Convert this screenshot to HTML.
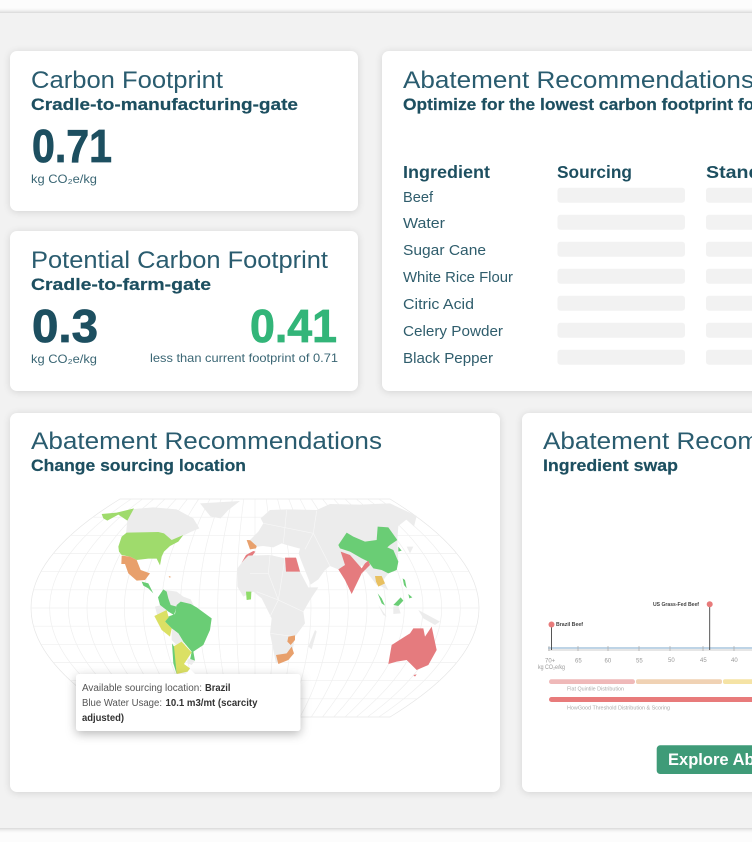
<!DOCTYPE html>
<html><head><meta charset="utf-8"><style>
html,body{margin:0;padding:0;width:752px;height:842px;overflow:hidden;background:#fcfcfc}
.panel{position:absolute;left:-20px;top:13px;width:800px;height:815px;background:#f2f2f2;box-shadow:0 0 5px rgba(0,0,0,.28)}
.card{position:absolute;background:#fff;border-radius:7px;box-shadow:0 1px 8px rgba(0,0,0,.13)}
svg{position:absolute;left:0;top:0;filter:blur(.25px)}
text{font-family:"Liberation Sans",sans-serif;fill:#1d4f60}
.t{font-size:24.5px;fill:#2a5c6f}
.s{font-size:17px;font-weight:700;stroke:#1d4f60;stroke-width:.2px}
.n{font-size:46px;font-weight:700;stroke:#1d4f60;stroke-width:.8px}
.u{font-size:12px;fill:#3a6674}
.h{font-size:17.5px;font-weight:700}
.r{font-size:15px;fill:#2f5d6c}
.g{font-size:6px;fill:#999}
.l{font-size:5.5px;font-weight:700;fill:#444}
.q{font-size:5.5px;fill:#aaa}
.p{font-size:10px;fill:#555}
.pb{font-size:10px;fill:#333;font-weight:700}
</style></head><body>
<div class="panel"></div>
<div class="card" style="left:10px;top:51px;width:348px;height:160px"></div>
<div class="card" style="left:10px;top:231px;width:348px;height:160px"></div>
<div class="card" style="left:382px;top:51px;width:400px;height:340px"></div>
<div class="card" style="left:10px;top:413px;width:490px;height:379px"></div>
<div class="card" style="left:522px;top:413px;width:300px;height:379px"></div>
<svg width="752" height="842" viewBox="0 0 752 842" xmlns="http://www.w3.org/2000/svg">
<defs>
<clipPath id="mc"><path d="M120 499 Q-58 608 120 717 L390 717 Q568 608 390 499Z"/></clipPath>
<filter id="ds" x="-20%" y="-40%" width="140%" height="200%"><feDropShadow dx="0" dy="3" stdDeviation="5" flood-color="#000" flood-opacity=".28"/></filter>
</defs>

<text class="t" x="31" y="88" textLength="192" lengthAdjust="spacingAndGlyphs">Carbon Footprint</text>
<text class="s" x="31" y="110" textLength="267" lengthAdjust="spacingAndGlyphs">Cradle-to-manufacturing-gate</text>
<text class="n" x="32" y="162" textLength="80" lengthAdjust="spacingAndGlyphs">0.71</text>
<text class="u" x="31" y="183" textLength="66" lengthAdjust="spacingAndGlyphs">kg CO₂e/kg</text>

<text class="t" x="31" y="268" textLength="297" lengthAdjust="spacingAndGlyphs">Potential Carbon Footprint</text>
<text class="s" x="31" y="290" textLength="180" lengthAdjust="spacingAndGlyphs">Cradle-to-farm-gate</text>
<text class="n" x="32" y="342" textLength="66" lengthAdjust="spacingAndGlyphs">0.3</text>
<text class="n" x="250" y="342" textLength="87" lengthAdjust="spacingAndGlyphs" style="fill:#33b579;stroke:#33b579">0.41</text>
<text class="u" x="31" y="363" textLength="66" lengthAdjust="spacingAndGlyphs">kg CO₂e/kg</text>
<text class="u" x="150" y="362" textLength="188" lengthAdjust="spacingAndGlyphs">less than current footprint of 0.71</text>

<text class="t" x="403" y="88" textLength="351" lengthAdjust="spacingAndGlyphs">Abatement Recommendations</text>
<text class="s" x="403" y="110" textLength="358" lengthAdjust="spacingAndGlyphs">Optimize for the lowest carbon footprint for</text>
<text class="h" x="403" y="178" textLength="87" lengthAdjust="spacingAndGlyphs">Ingredient</text>
<text class="h" x="557" y="178" textLength="75" lengthAdjust="spacingAndGlyphs">Sourcing</text>
<text class="h" x="706" y="178" textLength="85" lengthAdjust="spacingAndGlyphs">Standard</text>
<text class="r" x="403" y="202" textLength="30" lengthAdjust="spacingAndGlyphs">Beef</text>
<text class="r" x="403" y="228" textLength="42" lengthAdjust="spacingAndGlyphs">Water</text>
<text class="r" x="403" y="255" textLength="83" lengthAdjust="spacingAndGlyphs">Sugar Cane</text>
<text class="r" x="403" y="282" textLength="110" lengthAdjust="spacingAndGlyphs">White Rice Flour</text>
<text class="r" x="403" y="309" textLength="71" lengthAdjust="spacingAndGlyphs">Citric Acid</text>
<text class="r" x="403" y="336" textLength="100" lengthAdjust="spacingAndGlyphs">Celery Powder</text>
<text class="r" x="403" y="363" textLength="90" lengthAdjust="spacingAndGlyphs">Black Pepper</text>
<g fill="#f2f2f2">
<rect x="557.5" y="187.7" width="127.5" height="15" rx="3"/><rect x="706" y="187.7" width="60" height="15" rx="3"/>
<rect x="557.5" y="214.7" width="127.5" height="15" rx="3"/><rect x="706" y="214.7" width="60" height="15" rx="3"/>
<rect x="557.5" y="241.7" width="127.5" height="15" rx="3"/><rect x="706" y="241.7" width="60" height="15" rx="3"/>
<rect x="557.5" y="268.7" width="127.5" height="15" rx="3"/><rect x="706" y="268.7" width="60" height="15" rx="3"/>
<rect x="557.5" y="295.7" width="127.5" height="15" rx="3"/><rect x="706" y="295.7" width="60" height="15" rx="3"/>
<rect x="557.5" y="322.7" width="127.5" height="15" rx="3"/><rect x="706" y="322.7" width="60" height="15" rx="3"/>
<rect x="557.5" y="349.7" width="127.5" height="15" rx="3"/><rect x="706" y="349.7" width="60" height="15" rx="3"/>
</g>

<text class="t" x="31" y="449" textLength="351" lengthAdjust="spacingAndGlyphs">Abatement Recommendations</text>
<text class="s" x="31" y="471" textLength="215" lengthAdjust="spacingAndGlyphs">Change sourcing location</text>
<text class="t" x="543" y="449" textLength="351" lengthAdjust="spacingAndGlyphs">Abatement Recommendations</text>
<text class="s" x="543" y="471" textLength="135" lengthAdjust="spacingAndGlyphs">Ingredient swap</text>

<!-- map graticule -->
<g fill="none" stroke="#efefef" stroke-width=".7">
<path d="M120 499 Q-58 608 120 717 L390 717 Q568 608 390 499Z" stroke="#e6e6e6"/>
<path d="M255 499V717"/>
<path d="M266.25 499Q281.08 608 266.25 717M277.5 499Q307.17 608 277.5 717M288.75 499Q333.25 608 288.75 717M300 499Q359.33 608 300 717M311.25 499Q385.42 608 311.25 717M322.5 499Q411.5 608 322.5 717M333.75 499Q437.58 608 333.75 717M345 499Q463.67 608 345 717M356.25 499Q489.75 608 356.25 717M367.5 499Q515.83 608 367.5 717M378.75 499Q541.92 608 378.75 717"/>
<path d="M243.75 499Q228.92 608 243.75 717M232.5 499Q202.83 608 232.5 717M221.25 499Q176.75 608 221.25 717M210 499Q150.67 608 210 717M198.75 499Q124.58 608 198.75 717M187.5 499Q98.5 608 187.5 717M176.25 499Q72.42 608 176.25 717M165 499Q46.33 608 165 717M153.75 499Q20.25 608 153.75 717M142.5 499Q-5.83 608 142.5 717M131.25 499Q-31.92 608 131.25 717"/>
<g clip-path="url(#mc)"><path d="M20 517.2H490M20 535.3H490M20 553.5H490M20 571.7H490M20 589.8H490M20 608H490M20 626.2H490M20 644.3H490M20 662.5H490M20 680.7H490M20 698.8H490"/></g>
</g>

<!-- americas (crop A coordinates) -->
<g transform="translate(20 490) scale(.33333)">
<path fill="#ececec" d="M330 58L400 52 470 58 520 85 538 115 512 126 490 137 455 152 432 132 415 128 318 130 322 92Z"/>
<path fill="#ececec" d="M540 40L660 33 625 60 602 85 572 80Z"/>
<path fill="#9fdb6c" d="M245 72L290 68 342 55 322 92 295 74 262 92 250 85Z"/>
<path fill="#9fdb6c" d="M295 170L305 140 320 128 415 126 432 130 455 150 490 135 475 155 450 168 432 185 425 200 420 226 410 206 385 206 350 210 330 200 305 195 297 185Z"/>
<path fill="#e8a06c" d="M305 197L330 200 350 210 362 240 390 250 375 270 350 272 325 250 315 222 304 222Z"/>
<path fill="#6acd75" d="M365 275L385 280 400 310 385 295 370 287Z"/>
<path fill="#e8a06c" d="M446 258L454 261 448 263Z"/>
<path fill="#ececec" d="M435 300L470 305 490 320 512 328 522 348 490 338 470 350 450 345Z"/>
<path fill="#6acd75" d="M430 298L440 305 445 325 452 345 470 350 462 375 445 365 420 345 414 322Z"/>
<path fill="#ececec" d="M405 350L420 346 442 362 412 378Z"/>
<path fill="#6acd75" d="M435 395L445 380 465 372 470 345 482 335 512 342 530 352 575 385 570 420 550 465 520 485 525 512 510 510 515 485 490 455 475 430 455 415Z"/>
<path fill="#dbe064" d="M403 378L440 360 446 382 435 395 455 415 450 440 425 420Z"/>
<path fill="#ececec" d="M455 415L475 430 490 455 470 465 455 450Z"/>
<path fill="#dbe064" d="M460 470L485 455 515 487 500 510 492 522 510 535 503 545 470 552Z"/>
<path fill="#ececec" d="M505 505L525 512 515 525 503 520Z"/>
<path fill="#6acd75" d="M456 460L462 470 470 552 460 520Z"/>
<path fill="#e8a06c" d="M680 150L716 152 708 175 690 178Z"/>
<path fill="#e57b7e" d="M700 183L706 185 690 207 665 218 678 195Z"/>
</g>

<!-- old world (crop B coordinates) -->
<g transform="translate(250 490) scale(.33333)">
<path fill="#ececec" d="M0 150L25 125 40 100 32 85 60 60 110 58 200 60 240 42 330 44 420 40 500 78 492 110 470 88 445 108 442 150 445 215 440 240 415 250 400 270 415 300 395 290 380 285 365 265 345 240 335 225 305 310 285 270 265 238 240 228 225 240 205 268 182 284 152 208 146 190 150 176 110 165 95 160 70 172 40 168 22 170Z"/>
<path fill="#ececec" d="M-38 235L-20 212 -5 197 60 195 105 205 140 205 150 245 175 292 205 292 180 330 160 365 165 400 135 440 128 480 110 505 78 520 70 480 60 430 65 385 35 325 10 305 -20 320 -38 290Z"/>
<path fill="#ececec" d="M195 420L200 425 185 478 175 470Z"/>
<path fill="#ececec" d="M385 345L410 380 400 375ZM430 350L445 348 452 370 430 372ZM505 360L570 395 555 405 520 385ZM470 170L490 170 480 190Z"/>
<path fill="none" stroke="#f7f7f7" stroke-width="2" d="M60 195L55 250 85 330 60 380M105 205L85 330 160 365M0 250H55M20 305L85 330M60 430L135 440M200 62L190 130 165 178M240 228L190 130M110 60L100 160M40 100L190 130"/>
<path fill="#e57b7e" d="M105 203L138 203 150 245 108 245Z"/>
<path fill="#8fdc6a" d="M-12 305L4 305 3 328 -10 330Z"/>
<path fill="#e8a06c" d="M78 495L110 490 125 470 132 490 115 510 85 522ZM115 440L135 436 135 450 122 465 112 455Z"/>
<path fill="#6acd75" d="M265 165L290 128 310 140 345 155 380 150 383 110 415 112 442 150 420 165 412 172 430 180 445 215 440 240 415 250 395 240 370 235 355 215 335 205 300 185 270 175Z"/>
<path fill="#e57b7e" d="M272 185L300 195 335 235 345 220 355 212 360 225 335 250 305 312 285 270 265 238 285 225Z"/>
<path fill="#e8c060" d="M375 258L395 258 405 280 385 290 378 275Z"/>
<path fill="#6acd75" d="M383 310L395 325 405 347 395 340ZM430 345L452 322 460 332 445 348ZM458 265L465 270 470 295 462 285ZM475 312L487 322 478 325ZM445 170L455 182 445 185Z"/>
<path fill="#e57b7e" d="M415 522L425 465 480 430 490 415 520 415 525 440 545 410 560 480 535 525 500 540 470 510 440 515ZM490 555L500 553 495 560Z"/>
</g>

<!-- tooltip -->
<rect x="76" y="674" width="224.500" height="57" rx="3" fill="#fff" filter="url(#ds)"/>
<path d="M185 675L190 669 196 675Z" fill="#fff"/>
<text class="p" x="82" y="691" textLength="120" lengthAdjust="spacingAndGlyphs">Available sourcing location:</text>
<text class="pb" x="205" y="691" textLength="25.500" lengthAdjust="spacingAndGlyphs">Brazil</text>
<text class="p" x="82" y="706" textLength="80" lengthAdjust="spacingAndGlyphs">Blue Water Usage:</text>
<text class="pb" x="165.500" y="706" textLength="92" lengthAdjust="spacingAndGlyphs">10.1 m3/mt (scarcity</text>
<text class="pb" x="82" y="721" textLength="42" lengthAdjust="spacingAndGlyphs">adjusted)</text>

<!-- timeline -->
<path d="M548 650H752" stroke="#bbb" stroke-width=".8"/>
<path d="M548 648H752" stroke="#a9c5de" stroke-width="1.400"/>
<path d="M549 646V651M578 646V651M608 646V651M639 646V651M670 646V651M703 646V651M734 646V651" stroke="#aaa" stroke-width=".7"/>
<path d="M551.500 625V650M709.700 605V650" stroke="#444" stroke-width=".9"/>
<circle cx="551.500" cy="624.500" r="3" fill="#e87b7b"/>
<circle cx="709.700" cy="604.300" r="3" fill="#e87b7b"/>
<text class="l" x="556" y="626" textLength="27" lengthAdjust="spacingAndGlyphs">Brazil Beef</text>
<text class="l" x="653" y="606" textLength="46" lengthAdjust="spacingAndGlyphs">US Grass-Fed Beef</text>
<text class="g" x="545" y="662.500">70+</text><text class="g" x="575" y="662.500">65</text><text class="g" x="604.500" y="662.500">60</text><text class="g" x="636" y="662.500">55</text><text class="g" x="668" y="662">50</text><text class="g" x="700" y="662">45</text><text class="g" x="731" y="662">40</text>
<text class="g" x="538" y="669" textLength="27" lengthAdjust="spacingAndGlyphs">kg CO₂e/kg</text>
<rect x="549" y="679.300" width="86" height="4.700" rx="2.300" fill="#efb9b9"/>
<rect x="636" y="679.300" width="86" height="4.700" rx="2" fill="#f0d2b4"/>
<rect x="723" y="679.300" width="60" height="4.700" rx="2" fill="#f5e3a5"/>
<text class="q" x="567" y="690.500" textLength="57" lengthAdjust="spacingAndGlyphs">Flat Quintile Distribution</text>
<rect x="549" y="697" width="240" height="5" rx="2.500" fill="#e87b7b"/>
<text class="q" x="567" y="709.500" textLength="103" lengthAdjust="spacingAndGlyphs">HowGood Threshold Distribution &amp; Scoring</text>
<rect x="656.700" y="745.300" width="160" height="28.700" rx="3.500" fill="#3f9b78"/>
<text x="668" y="765" font-size="16.500" font-weight="700" style="fill:#fff" textLength="150" lengthAdjust="spacingAndGlyphs">Explore Abatement</text>
</svg>
</body></html>
